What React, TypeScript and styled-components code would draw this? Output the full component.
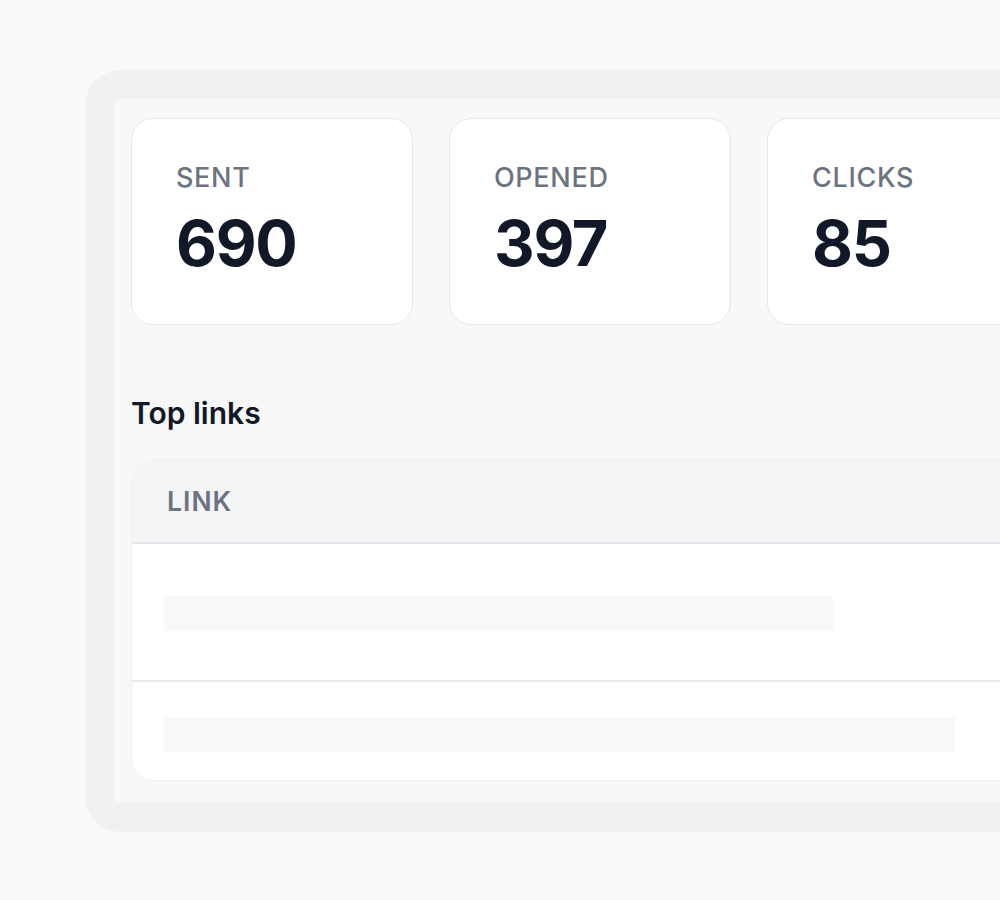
import styled, { createGlobalStyle } from "styled-components";

const GlobalStyle = createGlobalStyle`
  html, body {
    margin: 0;
    padding: 0;
    background: #f8f9fb;
    overflow: hidden;
  }
  body {
    font-family: Inter, "Noto Sans", "Liberation Sans", sans-serif;
  }
`;

export default function App() {
  const stats = [
    { label: "SENT", value: "690" },
    { label: "OPENED", value: "397" },
    { label: "CLICKS", value: "85" },
  ];
  return (
    <Page>
      <GlobalStyle />
      <Frame>
        <Screen>
          <StatRow>
            {stats.map((s) => (
              <StatCard key={s.label}>
                <StatLabel>{s.label}</StatLabel>
                <StatValue>{s.value}</StatValue>
              </StatCard>
            ))}
          </StatRow>
          <SectionTitle>Top links</SectionTitle>
          <Table>
            <TableHead>
              <HeadCell>LINK</HeadCell>
            </TableHead>
            <TableRow $pad="52px 32px 49px">
              <Skeleton style={{ width: 669 }} />
            </TableRow>
            <TableRow $pad="35px 32px 0" $last>
              <Skeleton style={{ width: 791 }} />
            </TableRow>
          </Table>
        </Screen>
      </Frame>
    </Page>
  );
}

const Page = styled.div`
  padding: 70px 0 0 85px;
  height: 100vh;
  box-sizing: border-box;
`;

const Frame = styled.div`
  width: 1000px;
  padding: 29px 0 30px 29px;
  background: #f1f1f1;
  border-radius: 36px 0 0 36px;
`;

const Screen = styled.div`
  display: flex;
  flex-direction: column;
  background: #f8f8f8;
  border-radius: 6px 0 0 6px;
  padding: 19px 0 21px 17px;
`;

const StatRow = styled.div`
  display: flex;
  gap: 36px;
`;

const StatCard = styled.div`
  flex: 0 0 auto;
  width: 282px;
  height: 207px;
  box-sizing: border-box;
  background: #ffffff;
  border: 1.5px solid #e6e8ec;
  border-radius: 22px;
  padding: 43px 0 0 44px;
  display: flex;
  flex-direction: column;
  gap: 13px;
`;

const StatLabel = styled.div`
  font-size: 27px;
  line-height: 32px;
  font-weight: 500;
  letter-spacing: 0.025em;
  color: #6b7280;
`;

const StatValue = styled.div`
  font-size: 63px;
  line-height: 72px;
  font-weight: 700;
  letter-spacing: -0.02em;
  color: #111827;
`;

const SectionTitle = styled.h2`
  margin: 70px 0 28px;
  font-size: 30px;
  line-height: 36px;
  font-weight: 600;
  color: #111827;
`;

const Table = styled.div`
  height: 322px;
  box-sizing: border-box;
  overflow: hidden;
  background: #ffffff;
  border: 1px solid #f0f1f3;
  border-right: none;
  border-radius: 22px 0 0 22px;
`;

const TableHead = styled.div`
  background: #f4f5f7;
  padding: 25px 35px 25px;
  border-bottom: 2px solid #e5e7eb;
`;

const HeadCell = styled.div`
  font-size: 26.5px;
  line-height: 32px;
  font-weight: 600;
  letter-spacing: 0.04em;
  color: #6b7280;
`;

const TableRow = styled.div<{ $pad: string; $last?: boolean }>`
  padding: ${(p) => p.$pad};
  border-bottom: ${(p) => (p.$last ? "none" : "2px solid #e8eaee")};
`;

const Skeleton = styled.div`
  height: 35px;
  background: #f8f9fa;
`;
